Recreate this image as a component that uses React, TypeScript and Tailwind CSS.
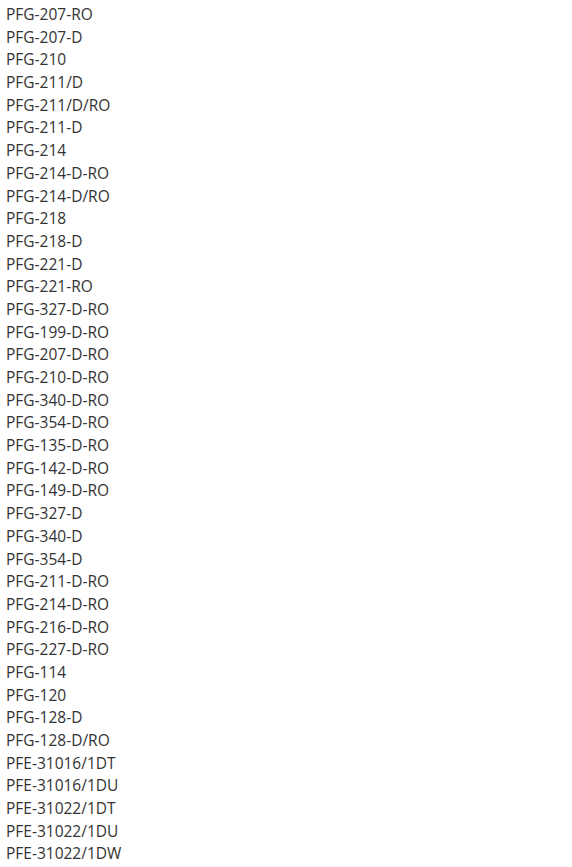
const items = [
  "PFG-207-RO","PFG-207-D","PFG-210","PFG-211/D","PFG-211/D/RO","PFG-211-D","PFG-214","PFG-214-D-RO","PFG-214-D/RO","PFG-218","PFG-218-D","PFG-221-D","PFG-221-RO","PFG-327-D-RO","PFG-199-D-RO","PFG-207-D-RO","PFG-210-D-RO","PFG-340-D-RO","PFG-354-D-RO","PFG-135-D-RO","PFG-142-D-RO","PFG-149-D-RO","PFG-327-D","PFG-340-D","PFG-354-D","PFG-211-D-RO","PFG-214-D-RO","PFG-216-D-RO","PFG-227-D-RO","PFG-114","PFG-120","PFG-128-D","PFG-128-D/RO","PFE-31016/1DT","PFE-31016/1DU","PFE-31022/1DT","PFE-31022/1DU","PFE-31022/1DW",
];

export default function App() {
  return (
    <div className="flex flex-col bg-white w-[572px] h-[867px] overflow-hidden px-[6px] pt-[3px] text-[15.5px] leading-[22.68px] text-[#333333] font-['Open_Sans',sans-serif]">
      {items.map((t, i) => (
        <div key={i}>{t}</div>
      ))}
    </div>
  );
}
